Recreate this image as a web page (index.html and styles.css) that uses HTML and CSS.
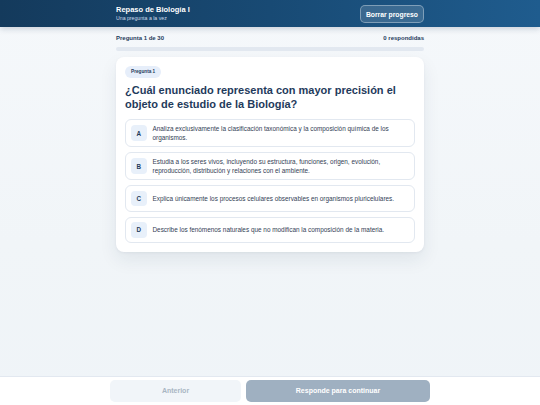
FILE: index.html
```html
<!DOCTYPE html>
<html lang="es">
<head>
<meta charset="utf-8">
<title>Repaso de Biología I</title>
<link rel="stylesheet" href="styles.css">
</head>
<body>
<div class="page">
  <header class="topbar">
    <div class="wrap topbar-inner">
      <div class="brand">
        <div class="brand-title">Repaso de Biología I</div>
        <div class="brand-sub">Una pregunta a la vez</div>
      </div>
      <button class="reset-btn">Borrar progreso</button>
    </div>
  </header>

  <main class="main">
    <div class="wrap">
      <div class="progress-row">
        <span>Pregunta 1 de 30</span>
        <span>0 respondidas</span>
      </div>
      <div class="progress-track"><div class="progress-fill"></div></div>

      <section class="card">
        <span class="badge">Pregunta 1</span>
        <h1 class="question">¿Cuál enunciado representa con mayor precisión el objeto de estudio de la Biología?</h1>
        <div class="options">
          <div class="option">
            <span class="letter">A</span>
            <span class="option-text">Analiza exclusivamente la clasificación taxonómica y la composición química de los organismos.</span>
          </div>
          <div class="option">
            <span class="letter">B</span>
            <span class="option-text">Estudia a los seres vivos, incluyendo su estructura, funciones, origen, evolución, reproducción, distribución y relaciones con el ambiente.</span>
          </div>
          <div class="option">
            <span class="letter">C</span>
            <span class="option-text">Explica únicamente los procesos celulares observables en organismos pluricelulares.</span>
          </div>
          <div class="option">
            <span class="letter">D</span>
            <span class="option-text">Describe los fenómenos naturales que no modifican la composición de la materia.</span>
          </div>
        </div>
      </section>
    </div>
  </main>

  <footer class="footer">
    <div class="footer-inner">
      <button class="btn-prev">Anterior</button>
      <button class="btn-next">Responde para continuar</button>
    </div>
  </footer>
</div>
</body>
</html>
```

FILE: styles.css
```css
* { box-sizing: border-box; }

html, body {
  margin: 0;
  padding: 0;
  height: 100%;
}

body {
  font-family: "Liberation Sans", Arial, sans-serif;
  background: linear-gradient(180deg, #f5f8fb 0%, #f1f5f8 60%, #eff4f8 100%);
  color: #1f3b5c;
}

.page {
  height: 100vh;
  display: flex;
  flex-direction: column;
}

.wrap {
  width: 308px;
  margin: 0 auto;
}

.topbar {
  height: 27px;
  flex: 0 0 auto;
  background: linear-gradient(90deg, #143a5c 0%, #184a74 50%, #1f5c8e 100%);
  box-shadow: 0 2px 6px rgba(15, 40, 70, 0.18);
  position: relative;
  z-index: 1;
}

.topbar-inner {
  height: 100%;
  display: flex;
  align-items: center;
  justify-content: space-between;
}

.brand-title {
  color: #ffffff;
  font-weight: 700;
  font-size: 7.5px;
  line-height: 9px;
}

.brand-sub {
  color: #cfdceb;
  font-size: 5.2px;
  line-height: 7px;
  margin-top: 1px;
}

.reset-btn {
  height: 18px;
  padding: 0 5px;
  border-radius: 5px;
  border: 1px solid rgba(255, 255, 255, 0.35);
  background: rgba(255, 255, 255, 0.14);
  color: #ffffff;
  font-family: inherit;
  font-weight: 700;
  font-size: 6.8px;
  margin-top: 1px;
}

.main {
  flex: 1 1 auto;
  padding-top: 7px;
}

.progress-row {
  display: flex;
  justify-content: space-between;
  font-size: 6px;
  font-weight: 700;
  line-height: 8px;
  color: #1f3b5c;
}

.progress-track {
  margin-top: 4.5px;
  height: 4.5px;
  border-radius: 3px;
  background: #e2e8f0;
}

.progress-fill {
  width: 0;
  height: 100%;
}

.card {
  margin-top: 6px;
  background: #ffffff;
  border-radius: 8px;
  padding: 9px;
  display: flex;
  flex-direction: column;
  align-items: flex-start;
  box-shadow: 0 8px 18px rgba(20, 45, 80, 0.08), 0 1px 3px rgba(20, 45, 80, 0.05);
}

.badge {
  display: block;
  height: 12px;
  line-height: 12px;
  padding: 0 6px;
  border-radius: 6px;
  background: #e6eefa;
  color: #1f3b5c;
  font-size: 4.7px;
  font-weight: 700;
}

.question {
  margin: 5px 0 8px 0;
  font-size: 11px;
  line-height: 14px;
  font-weight: 700;
  color: #1f3b5c;
}

.options {
  align-self: stretch;
  display: flex;
  flex-direction: column;
  gap: 5px;
}

.option {
  display: flex;
  align-items: center;
  gap: 6px;
  min-height: 26.5px;
  padding: 4px 6px 4px 5px;
  border: 1px solid #e2e8f0;
  border-radius: 6px;
  background: #ffffff;
}

.letter {
  flex: 0 0 15.5px;
  width: 15.5px;
  height: 15.5px;
  border-radius: 4px;
  background: #e8f0fa;
  color: #1f3b5c;
  font-size: 6.3px;
  font-weight: 700;
  display: flex;
  align-items: center;
  justify-content: center;
}

.option-text {
  font-size: 6.4px;
  line-height: 9px;
  color: #334155;
}

.footer {
  flex: 0 0 29px;
  background: #ffffff;
  border-top: 1px solid #e2e8f0;
  padding-top: 2.5px;
}

.footer-inner {
  width: 320px;
  margin: 0 auto;
  display: flex;
  gap: 5px;
}

.btn-prev, .btn-next {
  height: 22px;
  border: none;
  border-radius: 5px;
  font-family: inherit;
  font-weight: 700;
  font-size: 7px;
}

.btn-prev {
  width: 131px;
  background: #f1f5f9;
  color: #a9b5c3;
}

.btn-next {
  flex: 1 1 auto;
  background: #9fb0c1;
  color: #ffffff;
}
```
